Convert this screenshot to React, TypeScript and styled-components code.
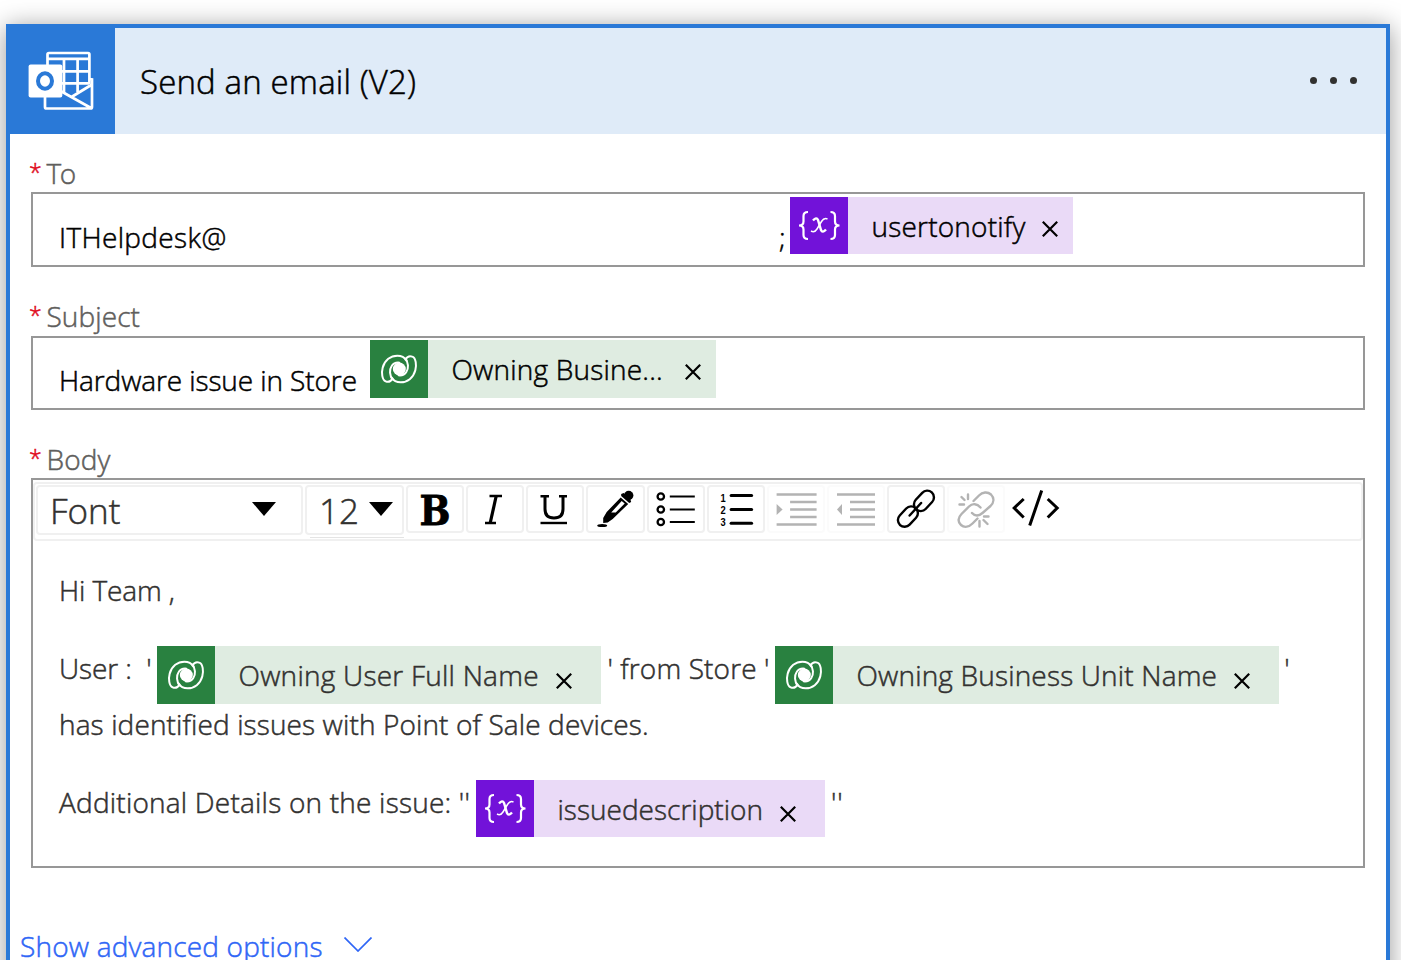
import React from 'react';
import styled, { createGlobalStyle } from 'styled-components';

const GlobalStyle = createGlobalStyle`
  html, body { margin: 0; padding: 0; background: #fff; }
  body {
    font-family: "Open Sans", "Noto Sans", sans-serif;
    font-weight: 300;
    overflow: hidden;
    -webkit-text-stroke: 0.5px currentColor;
  }
  *, *::before, *::after { box-sizing: border-box; }
  svg { -webkit-text-stroke: 0; }
`;

const Page = styled.main`
  height: 960px;
  padding: 24px 11px 0 6px;
  overflow: hidden;
`;

const Card = styled.section`
  height: 1010px;
  background: #fff;
  border: 4px solid #2a79d7;
  box-shadow: 0 3px 24px rgba(0, 0, 0, 0.4);
`;

const Header = styled.header`
  display: flex;
  height: 106px;
  background: #dfebf8;
`;

const Brand = styled.div`
  width: 105px;
  background: #2a79d7;
  svg { display: block; }
`;

const Title = styled.h1`
  flex: 1;
  margin: 0;
  padding-left: 25px;
  font-size: 33px;
  font-weight: 300;
  line-height: 108px;
  letter-spacing: 0.15px;
  color: #000;
`;

const MenuButton = styled.button`
  display: flex;
  align-items: center;
  gap: 13px;
  padding: 0 29px 1px 0;
  border: 0;
  background: none;
`;

const Dot = styled.span`
  width: 7px;
  height: 7px;
  border-radius: 50%;
  background: #323130;
`;

const Form = styled.div`
  padding: 0 21px;
`;

const Label = styled.div<{ $height: number; $lift?: number; $spacing?: number }>`
  display: flex;
  align-items: flex-end;
  height: ${p => p.$height}px;
  padding-bottom: ${p => p.$lift ?? 0}px;
  font-size: 28px;
  line-height: 38px;
  color: #605e5c;
  letter-spacing: ${p => p.$spacing ?? 0.1}px;
`;

const Required = styled.span`
  width: 17.5px;
  margin-left: -2px;
  padding-bottom: 1px;
  font-size: 23px;
  letter-spacing: 0;
  color: #e00b1c;
`;

const Input = styled.div<{ $height: number; $top?: number }>`
  display: flex;
  align-items: flex-start;
  height: ${p => p.$height}px;
  padding: ${p => p.$top ?? 2}px 0 0 26px;
  border: 2px solid #979797;
`;

const Run = styled.span<{ $width?: number; $spacing?: number; $top?: number; $shift?: number; $dark?: boolean }>`
  flex: none;
  width: ${p => (p.$width ? `${p.$width}px` : 'auto')};
  margin-top: ${p => p.$top ?? 0}px;
  text-indent: ${p => p.$shift ?? 0}px;
  font-size: 28px;
  line-height: 38px;
  letter-spacing: ${p => p.$spacing ?? -0.1}px;
  white-space: pre;
  color: ${p => (p.$dark ? '#000' : '#323130')};
`;

const TokenBox = styled.span<{ $width: number; $height: number; $tint: string }>`
  display: flex;
  flex: none;
  width: ${p => p.$width}px;
  height: ${p => p.$height}px;
  background: ${p => p.$tint};
`;

const TokenIcon = styled.span<{ $color: string }>`
  width: 58px;
  background: ${p => p.$color};
  svg { display: block; }
`;

const TokenLabel = styled.span<{ $dark?: boolean; $spacing: number }>`
  flex: 1;
  padding-left: 23.5px;
  font-size: 28px;
  line-height: 58px;
  letter-spacing: ${p => p.$spacing}px;
  white-space: pre;
  color: ${p => (p.$dark ? '#000' : '#323130')};
`;

const Remove = styled.span<{ $right: number; $top: number }>`
  padding: ${p => p.$top}px ${p => p.$right}px 0 0;
  svg { display: block; }
`;

const Editor = styled.div`
  height: 390px;
  padding-top: 2px;
  border: 2px solid #979797;
`;

const Toolbar = styled.div`
  display: flex;
  height: 59px;
  padding: 1px 1px 0;
  border: 2px solid #f0f0f0;
  border-radius: 4px;
`;

const Select = styled.div<{ $width: number; $pad: number }>`
  display: flex;
  flex: none;
  align-items: center;
  justify-content: space-between;
  width: ${p => p.$width}px;
  height: 50px;
  margin-right: 2px;
  padding: 1px ${p => (p.$width > 200 ? 25 : 9)}px 0 ${p => p.$pad}px;
  border: 2px solid #f0f0f0;
  border-radius: 4px;
  font-size: 35px;
  line-height: 46px;
  color: #323130;
  svg { display: block; margin-bottom: 3px; }
`;

const SizeUnderline = styled.div`
  height: 1px;
  margin: 2px 2px 0 5px;
  background: #e4e4e4;
`;

const Tool = styled.button<{ $border: string }>`
  flex: none;
  width: 58.2px;
  height: 48px;
  margin-right: 1.95px;
  padding: 0;
  border: 2px solid ${p => p.$border};
  border-radius: 4px;
  background: none;
  svg { display: block; overflow: visible; }
`;

const Content = styled.div`
  padding: 30px 0 0 26px;
`;

const Line = styled.div<{ $gap: number }>`
  display: flex;
  align-items: flex-start;
  margin-top: ${p => p.$gap}px;
`;

const Advanced = styled.a`
  display: flex;
  align-items: center;
  gap: 21.5px;
  margin: 59px 0 0 10px;
  font-size: 28px;
  line-height: 38px;
  letter-spacing: 0.18px;
  color: #2f66f6;
  svg { margin-bottom: 3px; }
`;

const OutlookIcon = () => (
  <svg width="105" height="106" viewBox="10 28 105 106" fill="none" stroke="#fff" strokeWidth="2.7">
    <path d="M47.5 65V54.5Q47.5 53 49 53H88Q89.400 53 89.400 54.500V84M47.500 58.800H89" />
    <path d="M64 59V93M77.600 59V92M61 71.300H89M61 83.300H89" />
    <path d="M45 97V107Q45 108.500 46.500 108.500H90.500Q92 108.500 92 107V79.500L89 79M92 84.500L71.500 97M61.500 91.500L91 108" />
    <rect x="28.600" y="64.500" width="33.700" height="33" rx="2" fill="#fff" stroke="none" />
    <ellipse cx="45" cy="81" rx="7" ry="7.700" stroke="#2a79d7" strokeWidth="4" />
  </svg>
);

const DataverseIcon = () => {
  const arm = 'M98 146C92 155 84 157 77 154C66 150 64 128 68 113C74 90 92 77 112 77C124 77 134 82 140 91M98 146C88 138 88 118 95 108C100 100 108 97 118 98';
  return (
    <svg width="58" height="58" viewBox="30 30 174 174" fill="none" stroke="#fff" strokeWidth="6" strokeLinecap="round">
      <path d={arm} />
      <path d={arm} transform="rotate(180 117 117)" />
      <circle cx="118" cy="117" r="19.500" fill="#fff" stroke="none" />
    </svg>
  );
};

const VariableIcon = () => (
  <svg width="58" height="57" viewBox="790 197 58 57" fill="none" stroke="#fff" strokeWidth="2.200">
    <path d="M808 212Q803.500 212 803.500 216V221.500Q803.500 225.500 799 225.500Q803.500 225.500 803.500 229.500V235Q803.500 239 808 239" />
    <path d="M830.500 212Q835 212 835 216V221.500Q835 225.500 839.500 225.500Q835 225.500 835 229.500V235Q835 239 830.500 239" />
    <path d="M813 220.500Q816.500 216.500 818 220L821 230Q822.500 233.500 826 229.500" strokeWidth="2.400" />
    <path d="M827.500 219Q824 217.500 821.500 221.500L817 229Q814.500 233 811 231" strokeWidth="1.500" />
  </svg>
);

const Cross = () => (
  <svg width="16" height="16" viewBox="0 0 16 16" stroke="#000" strokeWidth="2.200">
    <path d="M0.800 0.800L15.200 15.200M15.200 0.800L0.800 15.200" />
  </svg>
);

const Caret = () => (
  <svg width="24" height="14" viewBox="0 0 24 14"><path d="M0 0H24L12 14Z" /></svg>
);

interface TokenProps {
  kind: 'variable' | 'dataverse';
  text: string;
  width: number;
  dark?: boolean;
  spacing: number;
}

const Token = ({ kind, text, width, dark, spacing }: TokenProps) => {
  const variable = kind === 'variable';
  const crossTop = dark ? 24 : variable ? 26 : 27;
  return (
    <TokenBox $width={width} $height={variable ? 57 : 58} $tint={variable ? '#eadaf7' : '#dfece1'}>
      <TokenIcon $color={variable ? '#7212d9' : '#298140'}>
        {variable ? <VariableIcon /> : <DataverseIcon />}
      </TokenIcon>
      <TokenLabel $dark={dark} $spacing={spacing}>{text}</TokenLabel>
      <Remove $right={dark ? 15.5 : 29} $top={crossTop}><Cross /></Remove>
    </TokenBox>
  );
};

const gray = '#b3b3b3';

/* Toolbar drawings share one 54 x 44 canvas that fills the inside of a button. */
const Glyph = ({ children, ...rest }: React.SVGProps<SVGSVGElement>) => (
  <svg width="54" height="44" viewBox="0 0 54 44" fill="none" stroke="#000" strokeWidth="2" {...rest}>{children}</svg>
);

const BoldIcon = () => (
  <Glyph stroke="#000" strokeWidth="0.8" fill="#000">
    <text x="11.500" y="37.500" fontFamily="DejaVu Serif" fontWeight="700" fontSize="41.500" textLength="31" lengthAdjust="spacingAndGlyphs">B</text>
  </Glyph>
);
const ItalicIcon = () => (
  <Glyph viewBox="0.5 0 54 44"><path d="M22 9H34.500M17.500 36H28.500" strokeWidth="2.400" /><path d="M28.700 9L22.700 36" strokeWidth="3.200" /></Glyph>
);
const UnderlineIcon = () => (
  <Glyph strokeWidth="2.400">
    <path d="M12.500 9.300H21M31 9.300H39" />
    <path d="M17 9V22Q17 31 26 31Q35 31 35 22V9" strokeWidth="3" />
    <path d="M12.500 36H39" />
  </Glyph>
);
const DropperIcon = () => (
  <Glyph viewBox="-0.2 0 54 44" stroke="none" fill="#000">
    <ellipse cx="14" cy="38.500" rx="5" ry="1.600" />
    <circle cx="40.500" cy="8.500" r="4.700" />
    <path d="M33 7L35.500 6L38 8L42 12L43 15L41 16L33 9Z" />
    <path d="M32.500 10.500L40 17L24.500 32L19.500 35.500L15 36L15 31L18.500 25ZM33.500 14L23 25.500H27.500L36.500 16.500Z" fillRule="evenodd" />
  </Glyph>
);
const BulletsIcon = () => (
  <Glyph viewBox="0.2 0 54 44">
    {[9.500, 22.500, 35].map(y => (
      <React.Fragment key={y}><circle cx="12" cy={y} r="3.200" strokeWidth="2.300" /><path d={`M21 ${y}H46`} /></React.Fragment>
    ))}
  </Glyph>
);
const NumbersIcon = () => (
  <Glyph viewBox="-0.6 0 54 44">
    {[8.500, 22.500, 36.200].map((y, i) => (
      <React.Fragment key={y}>
        <text x="11" y={14.500 + i * 12} stroke="none" fill="#000" fontFamily="Liberation Sans" fontSize="10.500" fontWeight="700" textLength="5.200" lengthAdjust="spacingAndGlyphs">{i + 1}</text>
        <path d={`M21.500 ${y}H42`} strokeWidth="3" strokeLinecap="round" />
      </React.Fragment>
    ))}
  </Glyph>
);
const IndentIcon = () => (
  <Glyph viewBox="-0.6 0 54 44" stroke={gray} strokeWidth="2.600">
    <path d="M7 7.500H47M20.500 15H47M20.500 22.500H47M20.500 30H47M7 37.500H47" />
    <path d="M7 17V28L13 22.500Z" fill={gray} stroke="none" />
  </Glyph>
);
const OutdentIcon = () => (
  <Glyph stroke={gray} strokeWidth="2.600">
    <path d="M8 7.500H46M21 15H46M21 22.500H46M21 30H46M8 37.500H46" />
    <path d="M13 17V28L8 22.500Z" fill={gray} stroke="none" />
  </Glyph>
);
const LinkIcon = () => (
  <Glyph viewBox="1.4 0 54 44" strokeWidth="2.400">
    <rect x="25" y="7.500" width="23" height="13.500" rx="6.750" transform="rotate(-47 36 14.250)" />
    <rect x="9" y="23.200" width="23" height="13.500" rx="6.750" transform="rotate(-47 20 30)" />
    <path d="M22 28.500L33.500 16" strokeLinecap="round" />
  </Glyph>
);
const UnlinkIcon = () => (
  <Glyph viewBox="-0.5 0 54 44" stroke={gray} strokeWidth="2.400" strokeLinecap="round">
    <path d="M24 14L29.500 8.500C33 5 38 4.500 41.500 7.500C45 11 44.500 15.500 41 19L33 26C29.500 29 25.500 29.500 22.500 26" />
    <path d="M31 20.500C27.500 16.500 23 16 19.500 19.500L12 27C8.500 30.500 8 35 11.500 38C15 41 19.500 40 23 36.500L28 31.500" />
    <path d="M18.500 7.500V12M12 10L15 13M10 17.500H14.500M30 34V39.500M34 33L38 37M34.500 29.500H39" />
  </Glyph>
);
const CodeIcon = () => (
  <Glyph viewBox="2.3 0 54 44" strokeWidth="3">
    <path d="M17 12L7.500 21L17 30.500M41 12L50.500 21L41 30.500M35 3.500L23 38.500" />
  </Glyph>
);

const tools: { name: string; Icon: () => React.JSX.Element; border: string }[] = [
  { name: 'Bold', Icon: BoldIcon, border: '#f0f0f0' },
  { name: 'Italic', Icon: ItalicIcon, border: '#f0f0f0' },
  { name: 'Underline', Icon: UnderlineIcon, border: '#f0f0f0' },
  { name: 'Text color', Icon: DropperIcon, border: '#f0f0f0' },
  { name: 'Bulleted list', Icon: BulletsIcon, border: '#f0f0f0' },
  { name: 'Numbered list', Icon: NumbersIcon, border: '#f0f0f0' },
  { name: 'Indent', Icon: IndentIcon, border: '#fbfbfb' },
  { name: 'Outdent', Icon: OutdentIcon, border: '#fbfbfb' },
  { name: 'Link', Icon: LinkIcon, border: '#f0f0f0' },
  { name: 'Unlink', Icon: UnlinkIcon, border: '#fbfbfb' },
  { name: 'Code view', Icon: CodeIcon, border: 'transparent' },
];

export default function App() {
  return (
    <>
      <GlobalStyle />
      <Page>
        <Card>
          <Header>
            <Brand><OutlookIcon /></Brand>
            <Title>Send an email (V2)</Title>
            <MenuButton aria-label="Menu"><Dot /><Dot /><Dot /></MenuButton>
          </Header>
          <Form>
            <Label $height={58} $spacing={-1.5}><Required>*</Required>To</Label>
            <Input $height={75} $top={3}>
              <Run $dark $top={21} $width={720} $spacing={0.35}>ITHelpdesk@</Run>
              <Run $dark $top={21} $width={11}>;</Run>
              <Token kind="variable" text="usertonotify" width={283} spacing={0.2} dark />
            </Input>
            <Label $height={69} $lift={1}><Required>*</Required>Subject</Label>
            <Input $height={74}>
              <Run $dark $top={21} $width={311} $spacing={-0.1}>Hardware issue in Store</Run>
              <Token kind="dataverse" text="Owning Busine..." width={346} spacing={0.2} dark />
            </Input>
            <Label $height={68}><Required>*</Required>Body</Label>
            <Editor>
              <Toolbar>
                <Select $width={267} $pad={12}>Font<Caret /></Select>
                <div>
                  <Select $width={99} $pad={12}>12<Caret /></Select>
                  <SizeUnderline />
                </div>
                {tools.map(({ name, Icon, border }) => (
                  <Tool key={name} aria-label={name} $border={border}><Icon /></Tool>
                ))}
              </Toolbar>
              <Content>
                <Run>Hi Team ,</Run>
                <Line $gap={37}>
                  <Run $top={3} $width={98}>{"User :  '"}</Run>
                  <Token kind="dataverse" text="Owning User Full Name" width={444} spacing={0.24} />
                  <Run $top={3} $width={174} $shift={-1} $spacing={0.13}>{" ' from Store '"}</Run>
                  <Token kind="dataverse" text="Owning Business Unit Name" width={504} spacing={0.17} />
                  <Run $top={3} $shift={-2}>{" '"}</Run>
                </Line>
                <Line $gap={1}><Run $spacing={0.12}>has identified issues with Point of Sale devices.</Run></Line>
                <Line $gap={37}>
                  <Run $top={3} $width={417} $spacing={0.21}>Additional Details on the issue: ''</Run>
                  <Token kind="variable" text="issuedescription" width={349} spacing={0.02} />
                  <Run $top={3} $shift={-2} $spacing={0.8}>{" ''"}</Run>
                </Line>
              </Content>
            </Editor>
          </Form>
          <Advanced>
            Show advanced options
            <svg width="28" height="15" viewBox="0 0 28 15" fill="none" stroke="#2f66f6" strokeWidth="1.700"><path d="M0.500 0.500L14 14L27.500 0.500" /></svg>
          </Advanced>
        </Card>
      </Page>
    </>
  );
}
